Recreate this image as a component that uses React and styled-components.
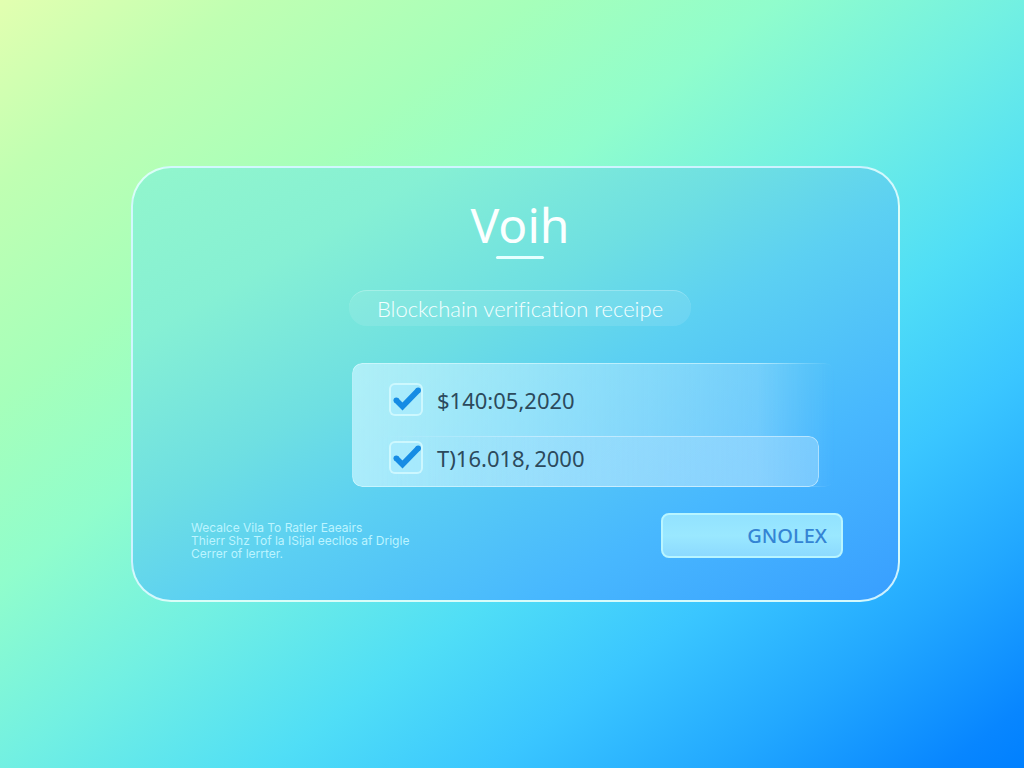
import React from "react";
import styled, { createGlobalStyle } from "styled-components";

const GlobalStyle = createGlobalStyle`
  *, *::before, *::after { box-sizing: border-box; }
  body { margin: 0; font-family: "Noto Sans", "Open Sans", sans-serif; }
`;

const Page = styled.main`
  min-height: 100vh;
  display: flex;
  align-items: center;
  padding: 32px 124px 32px 131px;
  background: linear-gradient(
    to bottom right,
    #e2ffb0 0%,
    #c0ffb2 12%,
    #a6ffba 26%,
    #90fdcc 38%,
    #72f0e2 50%,
    #50def6 63%,
    #3ac6ff 74%,
    #22a8ff 85%,
    #0886ff 96%,
    #0080ff 100%
  );
`;

const Card = styled.section`
  flex: 1;
  min-width: 0;
  display: flex;
  flex-direction: column;
  padding: 28px 55px 40px 58px;
  border: 2px solid rgba(232, 255, 255, 0.85);
  border-radius: 40px;
  background: linear-gradient(
    to bottom right,
    #92f6cc 0%,
    #86f0d4 20%,
    #6edfe2 40%,
    #5cd0f2 54%,
    #48b8fe 76%,
    #389eff 100%
  );
`;

const Header = styled.header`
  display: flex;
  flex-direction: column;
  align-items: center;
  padding-left: 6px;
`;

const Title = styled.h1`
  margin: 0;
  font-size: 48px;
  line-height: 58px;
  font-weight: 400;
  color: #fbffff;
`;

const Underline = styled.span`
  width: 48px;
  height: 3px;
  margin-top: 2px;
  border-radius: 2px;
  background: #e6ffff;
`;

const Subtitle = styled.p`
  margin: 31px 0 0;
  padding: 0 28px;
  border-top: 1px solid rgba(255, 255, 255, 0.25);
  border-radius: 18px;
  background: rgba(255, 255, 255, 0.1);
  font-family: Lato, "Open Sans", sans-serif;
  font-size: 22px;
  line-height: 35px;
  font-weight: 300;
  font-variant-ligatures: none;
  color: #f4ffff;
`;

const Receipt = styled.ul`
  position: relative;
  margin: 37px 24px 0 161px;
  padding: 0;
  list-style: none;

  &::before {
    content: "";
    position: absolute;
    inset: 0 -16px 0 0;
    border: 1px solid rgba(222, 252, 255, 0.6);
    border-right: 0;
    border-radius: 10px;
    background: linear-gradient(to right, rgba(196, 244, 255, 0.75), rgba(150, 212, 255, 0.35));
    mask-image: linear-gradient(to right, #000 84%, transparent 100%);
  }
`;

const Item = styled.li`
  position: relative;
  display: flex;
  align-items: center;
  height: ${(p) => (p.$boxed ? 51 : 73)}px;
  padding: ${(p) => (p.$boxed ? "0 0 8px 37px" : "0 0 0 37px")};

  ${(p) =>
    p.$boxed &&
    `
    &::before {
      content: "";
      position: absolute;
      inset: 0;
      border: 1px solid rgba(210, 240, 255, 0.7);
      border-left: 0;
      border-radius: 10px;
      background: linear-gradient(to right, rgba(190, 230, 255, 0.1), rgba(175, 225, 255, 0.45));
      mask-image: linear-gradient(to right, transparent 6%, #000 40%);
    }
  `}
`;

const CheckLabel = styled.label`
  position: relative;
  display: flex;
  align-items: center;
  gap: 14px;
  font-size: 22px;
  line-height: 32px;
  color: #2c4a5c;
`;

const CheckFrame = styled.span`
  display: grid;
  flex: none;

  & > * {
    grid-area: 1 / 1;
  }

  & > svg {
    pointer-events: none;
  }
`;

const CheckInput = styled.input`
  appearance: none;
  width: 34px;
  height: 33px;
  margin: 0;
  border: 2px solid rgba(226, 255, 255, 0.65);
  border-radius: 6px;
  background: rgba(170, 236, 255, 0.5);
`;

const Footer = styled.footer`
  display: flex;
  justify-content: space-between;
  align-items: flex-start;
  margin-top: 26px;
`;

const Note = styled.p`
  margin: 8px 0 0;
  font-family: Inter, "Liberation Sans", sans-serif;
  font-size: 12px;
  line-height: 13px;
  color: #bcf4ff;
`;

const Action = styled.button`
  width: 182px;
  height: 45px;
  padding: 0 14px;
  border: 2px solid #b8f5ff;
  border-radius: 8px;
  background: linear-gradient(to bottom, #92e2ff, #9ae8ff 50%, #8cdaff);
  font-family: "Noto Sans", sans-serif;
  font-size: 20px;
  font-weight: 500;
  text-align: right;
  color: #3484d4;
`;

function Check({ id, children }) {
  return (
    <CheckLabel htmlFor={id}>
      <CheckFrame>
        <CheckInput id={id} type="checkbox" defaultChecked />
        <svg width="34" height="33" viewBox="0 0 34 33" fill="none" aria-hidden="true">
          <path d="M7 17 L13.5 23.5 L29.5 7" stroke="#168ce4" strokeWidth="5.6" strokeLinejoin="miter" />
          <circle cx="7.3" cy="17.3" r="2.8" fill="#168ce4" />
          <circle cx="29.2" cy="7.2" r="2.8" fill="#168ce4" />
        </svg>
      </CheckFrame>
      {children}
    </CheckLabel>
  );
}

export default function App() {
  return (
    <>
      <GlobalStyle />
      <Page>
        <Card>
          <Header>
            <Title>Voih</Title>
            <Underline />
            <Subtitle>Blockchain verification receipe</Subtitle>
          </Header>
          <Receipt>
            <Item>
              <Check id="amount">$140:05,2020</Check>
            </Item>
            <Item $boxed>
              <Check id="total">T)16.018,{"\u2009"}2000</Check>
            </Item>
          </Receipt>
          <Footer>
            <Note>
              Wecalce Vila To Ratler Eaeairs
              <br />
              Thierr Shz Tof la ISijal eecllos af Drigle
              <br />
              Cerrer of lerrter.
            </Note>
            <Action type="button">GNOLEX</Action>
          </Footer>
        </Card>
      </Page>
    </>
  );
}
